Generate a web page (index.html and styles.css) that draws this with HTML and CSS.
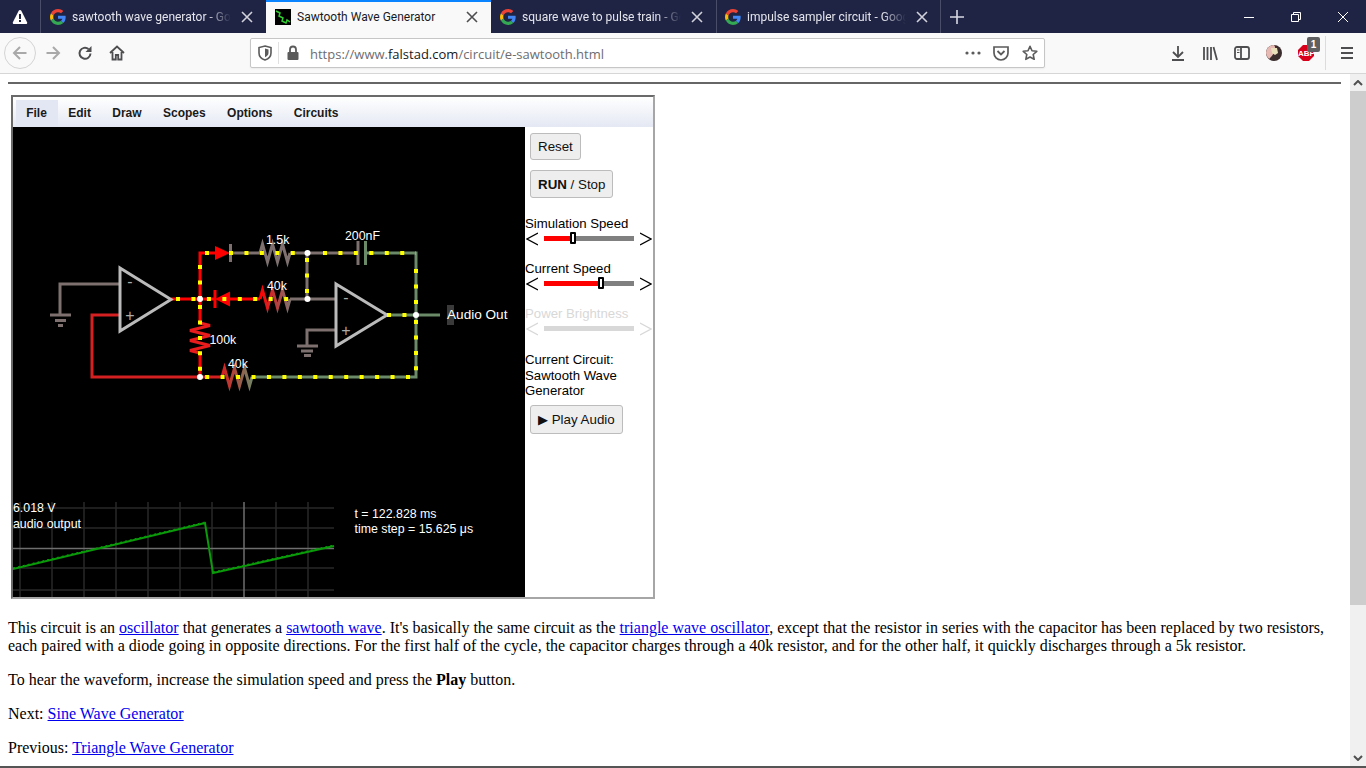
FILE: index.html
```html
<!DOCTYPE html>
<html lang="en">
<head>
  <meta charset="UTF-8">
  <meta name="viewport" content="width=device-width, initial-scale=1.0">
  <title>Sawtooth Wave Generator</title>
  <link rel="stylesheet" href="styles.css">
</head>
<body>
  <svg class="defs" width="0" height="0">
    <defs>
      <symbol id="google" viewBox="0 0 48 48">
        <path fill="#EA4335" d="M24 9.5c3.54 0 6.71 1.22 9.21 3.6l6.85-6.85C35.9 2.38 30.47 0 24 0 14.62 0 6.51 5.38 2.56 13.22l7.98 6.19C12.43 13.72 17.74 9.5 24 9.5z"/>
        <path fill="#4285F4" d="M46.98 24.55c0-1.57-.15-3.09-.38-4.55H24v9.02h12.94c-.58 2.96-2.26 5.48-4.78 7.18l7.73 6c4.51-4.18 7.09-10.36 7.09-17.65z"/>
        <path fill="#FBBC05" d="M10.53 28.59c-.48-1.45-.76-2.99-.76-4.59s.27-3.14.76-4.59l-7.98-6.19C.92 16.46 0 20.12 0 24c0 3.88.92 7.54 2.56 10.78l7.97-6.19z"/>
        <path fill="#34A853" d="M24 48c6.48 0 11.93-2.13 15.89-5.81l-7.73-6c-2.15 1.45-4.92 2.3-8.16 2.3-6.26 0-11.57-4.22-13.47-9.91l-7.98 6.19C6.51 42.62 14.62 48 24 48z"/>
      </symbol>
      <symbol id="close" viewBox="0 0 12 12">
        <path d="M1 1l10 10M11 1L1 11" fill="none" stroke="currentColor" stroke-width="1.6"/>
      </symbol>
    </defs>
  </svg>

  <div class="window">
    <div class="tabbar">
      <div class="alert-box">
        <svg width="16" height="16" viewBox="0 0 16 16"><path d="M8 1c.6 0 1 .3 1.300 .8l5.800 11.400c.4.800-.1 1.800-1.100 1.800H2c-1 0-1.500-1-1.100-1.800L6.700 1.800C7 1.300 7.400 1 8 1z" fill="#fff"/><path d="M7 5h2v5H7zM7 11h2v2H7z" fill="#1f2344"/></svg>
      </div>
      <div class="tab">
        <svg class="fav" width="16" height="16"><use href="#google"/></svg>
        <span class="tab-title">sawtooth wave generator - Goo</span>
        <svg class="tab-close" width="12" height="12"><use href="#close"/></svg>
      </div>
      <div class="tab tab-active">
        <svg class="fav" width="16" height="16" viewBox="0 0 16 16"><rect width="16" height="16" fill="#000"/><path d="M1 2l4 2-1 3 4 2-1 3 4 2 1-3 3 2" fill="none" stroke="#3c3" stroke-width="1.500"/></svg>
        <span class="tab-title">Sawtooth Wave Generator</span>
        <svg class="tab-close" width="12" height="12"><use href="#close"/></svg>
      </div>
      <div class="tab">
        <svg class="fav" width="16" height="16"><use href="#google"/></svg>
        <span class="tab-title">square wave to pulse train - Go</span>
        <svg class="tab-close" width="12" height="12"><use href="#close"/></svg>
      </div>
      <div class="tab tab-last">
        <svg class="fav" width="16" height="16"><use href="#google"/></svg>
        <span class="tab-title">impulse sampler circuit - Googl</span>
        <svg class="tab-close" width="12" height="12"><use href="#close"/></svg>
      </div>
      <svg class="new-tab" width="16" height="16" viewBox="0 0 16 16"><path d="M8 1v14M1 8h14" stroke="#d8d9e2" stroke-width="1.600"/></svg>
      <div class="win-controls">
        <svg width="12" height="12" viewBox="0 0 12 12"><path d="M1 6.500h10" stroke="#fff"/></svg>
        <svg width="12" height="12" viewBox="0 0 12 12"><path d="M1.500 3.500h7v7h-7zM3.500 3.500v-2h7v7h-2" fill="none" stroke="#fff"/></svg>
        <svg width="12" height="12" viewBox="0 0 12 12"><path d="M1 1l10 10M11 1L1 11" stroke="#fff"/></svg>
      </div>
    </div>

    <div class="toolbar">
      <div class="nav-group">
        <span class="nav-btn nav-back">
          <svg width="16" height="16" viewBox="0 0 16 16"><path d="M14.500 8H2M8 2L2 8l6 6" fill="none" stroke="#a9a9aa" stroke-width="2"/></svg>
        </span>
        <span class="nav-btn">
          <svg width="16" height="16" viewBox="0 0 16 16"><path d="M1.500 8H14M8 2l6 6-6 6" fill="none" stroke="#a9a9aa" stroke-width="2"/></svg>
        </span>
        <span class="nav-btn">
          <svg width="16" height="16" viewBox="0 0 16 16"><path d="M13.500 8.500A5.500 5.500 0 1 1 11.500 4" fill="none" stroke="#4e4e50" stroke-width="2"/><path d="M14.500 1v6h-6z" fill="#4e4e50"/></svg>
        </span>
        <span class="nav-btn">
          <svg width="16" height="16" viewBox="0 0 16 16"><path d="M1 8l7-6.500L15 8M3.500 7v7.500h3.300V10h2.400v4.500h3.300V7" fill="none" stroke="#4e4e50" stroke-width="1.800"/></svg>
        </span>
      </div>
      <div class="urlbar">
        <svg width="14" height="16" viewBox="0 0 14 16"><path d="M7 1l6 1.500V8c0 3.500-3 6-6 7-3-1-6-3.500-6-7V2.500z" fill="none" stroke="#5b5b5c" stroke-width="1.600"/><path d="M7 3.500l3.500 1V8c0 2-1.800 3.500-3.500 4.300z" fill="#5b5b5c"/></svg>
        <span class="url-sep"></span>
        <svg width="14" height="16" viewBox="0 0 14 16"><path d="M4 7V4.500a3 3 0 0 1 6 0V7" fill="none" stroke="#5b5b5c" stroke-width="1.800"/><rect x="1.500" y="7" width="11" height="8" rx="1" fill="#5b5b5c"/></svg>
        <span class="url-text">https://www.<b>falstad.com</b>/circuit/e-sawtooth.html</span>
        <svg class="url-dots" width="16" height="4" viewBox="0 0 16 4"><circle cx="2" cy="2" r="1.600"/><circle cx="8" cy="2" r="1.600"/><circle cx="14" cy="2" r="1.600"/></svg>
        <svg width="16" height="16" viewBox="0 0 16 16"><path d="M1 2h14v6a7 7 0 0 1-14 0z" fill="none" stroke="#5b5b5c" stroke-width="1.700"/><path d="M4.500 6L8 9.500 11.500 6" fill="none" stroke="#5b5b5c" stroke-width="1.800"/></svg>
        <svg width="16" height="16" viewBox="0 0 16 16"><path d="M8 1.300l2 4.500 4.800.5-3.600 3.200 1 4.800L8 12l-4.200 2.300 1-4.800L1.200 6.300 6 5.800z" fill="none" stroke="#5b5b5c" stroke-width="1.600" stroke-linejoin="round"/></svg>
      </div>
      <div class="tool-group">
        <span class="tool-btn">
          <svg width="16" height="16" viewBox="0 0 16 16"><path d="M8 1v10M3 7l5 5 5-5" fill="none" stroke="#4e4e50" stroke-width="1.800"/><path d="M2 15h12" stroke="#4e4e50" stroke-width="2"/></svg>
        </span>
        <span class="tool-btn">
          <svg width="16" height="16" viewBox="0 0 16 16"><path d="M2 2v13M5.500 2v13M9 2v13M11.500 2l3.500 13" fill="none" stroke="#4e4e50" stroke-width="1.800"/></svg>
        </span>
        <span class="tool-btn">
          <svg width="16" height="16" viewBox="0 0 16 16"><rect x="1" y="2" width="14" height="12" rx="2" fill="none" stroke="#4e4e50" stroke-width="1.800"/><path d="M7 2v12" stroke="#4e4e50" stroke-width="1.800"/><path d="M3 5h2.500M3 7.500h2.500" stroke="#4e4e50"/></svg>
        </span>
        <span class="tool-btn">
          <svg width="16" height="16" viewBox="0 0 16 16"><circle cx="8" cy="8" r="8" fill="#3a2c2c"/><path d="M0 8a8 8 0 0 1 8-8c2 2 1 6 0 8-2 3-4 5-5 6A8 8 0 0 1 0 8z" fill="#e6b9b2"/><path d="M5 3h6l1 5-3 2-3-2z" fill="#e9dfb8"/></svg>
        </span>
        <span class="tool-btn abp">
          <svg width="16" height="16" viewBox="0 0 16 16"><path d="M5 0h6l5 5v6l-5 5H5l-5-5V5z" fill="#d8001b"/></svg>
          <span class="abp-text">ABP</span>
          <span class="abp-count">1</span>
        </span>
        <span class="tool-sep"></span>
        <span class="tool-btn tool-menu">
          <svg width="14" height="14" viewBox="0 0 14 14"><path d="M1 2h12M1 7h12M1 12h12" stroke="#4e4e50" stroke-width="2"/></svg>
        </span>
      </div>
    </div>

    <div class="viewport">
      <div class="page">
        <hr class="rule">
        <div class="sim">
          <div class="menubar">
            <span class="menu-item menu-open">File</span>
            <span class="menu-item">Edit</span>
            <span class="menu-item">Draw</span>
            <span class="menu-item">Scopes</span>
            <span class="menu-item">Options</span>
            <span class="menu-item">Circuits</span>
          </div>
          <div class="sim-body">
            <svg class="canvas" width="512" height="470" viewBox="13 127 512 470">
              <defs>
                <linearGradient id="midres" gradientUnits="userSpaceOnUse" x1="260" y1="0" x2="290" y2="0">
                  <stop offset="0" stop-color="#f00"/><stop offset="1" stop-color="#7d706e"/>
                </linearGradient>
                <linearGradient id="lowres" gradientUnits="userSpaceOnUse" x1="222" y1="0" x2="254" y2="0">
                  <stop offset="0" stop-color="#d42020"/><stop offset="1" stop-color="#6a8a68"/>
                </linearGradient>
              </defs>

              <!-- scope -->
              <path class="grid" d="M20 502v95M52 502v95M84 502v95M116 502v95M148 502v95M180 502v95M212 502v95M276 502v95M308 502v95M13 508h321M13 528h321M13 568h321M13 590h321"/>
              <path class="grid-main" d="M13 548.500h321M244 502v95"/>
              <path class="trace" d="M13 569L205 523L213 573L334 546"/>
              <path class="trace teeth" d="M13 568L205 522M213 572L334 545"/>
              <text class="label" x="13" y="512">6.018 V</text>
              <text class="label" x="13" y="528">audio output</text>
              <text class="label" x="354.500" y="518">t = 122.828 ms</text>
              <text class="label" x="354.500" y="533">time step = 15.625 μs</text>

              <!-- wires -->
              <path class="wire gray" d="M231 253H260M290 253H358M307 253V299M290 299H336M120 284H60V314M336 330H307V346"/>
              <path class="wire green" d="M365 253H416V377H254M387 315H440"/>
              <path class="wire dim-red" d="M120 315H92V377H222"/>
              <path class="wire red" d="M215 253H200V323M200 354V377M171 299H215M230 299H260"/>

              <!-- resistors -->
              <path class="res" stroke="#7d706e" d="M260 253l2.500-9 5 18 5-18 5 18 5-18 5 18 2.500-9"/>
              <path class="res" stroke="url(#midres)" d="M260 299l2.500-9 5 18 5-18 5 18 5-18 5 18 2.500-9"/>
              <path class="res" stroke="url(#lowres)" d="M222 377l2.500-9 5 18 5-18 5 18 5-18 5 18 2.500-9"/>
              <path class="res" stroke="#e81c1c" d="M200 323l10 2.500-20 5 20 5-20 5 20 5-20 5 10 2.500"/>

              <!-- diodes and capacitor -->
              <path class="diode" d="M215 246v14l15-7z"/>
              <path class="wire gray" d="M230.500 244v18"/>
              <path class="diode" d="M230 291.500v15l-15-7.500z"/>
              <path class="wire red" d="M215 290v18"/>
              <path class="wire gray" d="M358 241v24"/>
              <path class="wire green" d="M365.500 241v24"/>

              <!-- grounds -->
              <path class="wire gray" d="M50 315h21M55 320.500h11M58 325.500h5M297 346h21M301 351h12M304 355.500h7"/>

              <!-- op amps -->
              <path class="opamp" d="M120 268L171 299.500L120 331Z"/>
              <path class="opamp" d="M336 284L387 315L336 346Z"/>
              <text class="sign" x="130" y="287">-</text>
              <text class="sign" x="130" y="320.500">+</text>
              <text class="sign" x="346" y="303">-</text>
              <text class="sign" x="346" y="336">+</text>

              <!-- current dots -->
              <path class="dots" d="M205 253H215M229 253H295M323 253H416M416 269V315M416 320V377M410 377H200M200 265V299M200 305V377M176 299H296M307 258V299M387 315H416"/>

              <circle class="node" cx="200" cy="299" r="3"/>
              <circle class="node" cx="200" cy="377" r="3"/>
              <circle class="node" cx="307.500" cy="253" r="3"/>
              <circle class="node" cx="307.500" cy="299" r="3"/>
              <circle class="node" cx="416" cy="315" r="3"/>

              <rect class="out-post" x="447" y="305" width="7" height="20"/>
              <text class="label big" x="447" y="319">Audio Out</text>
              <text class="label" x="266" y="244">1.5k</text>
              <text class="label" x="267" y="290">40k</text>
              <text class="label" x="345" y="240">200nF</text>
              <text class="label" x="209.500" y="344">100k</text>
              <text class="label" x="228" y="368">40k</text>
            </svg>

            <div class="panel">
              <button class="btn btn-reset">Reset</button>
              <button class="btn btn-run"><b>RUN</b> / Stop</button>

              <div class="ctl ctl-first">
                <div class="ctl-label">Simulation Speed</div>
                <div class="slider">
                  <svg width="12" height="16" viewBox="0 0 12 16"><path d="M12 2L1 8l11 6" fill="none" stroke="#000" stroke-width="1.200"/></svg>
                  <div class="track"><div class="fill" style="width: 29px"></div><span class="thumb" style="left: 26px"></span></div>
                  <svg width="12" height="16" viewBox="0 0 12 16"><path d="M0 2l11 6L0 14" fill="none" stroke="#000" stroke-width="1.200"/></svg>
                </div>
              </div>
              <div class="ctl">
                <div class="ctl-label">Current Speed</div>
                <div class="slider">
                  <svg width="12" height="16" viewBox="0 0 12 16"><path d="M12 2L1 8l11 6" fill="none" stroke="#000" stroke-width="1.200"/></svg>
                  <div class="track"><div class="fill" style="width: 57px"></div><span class="thumb" style="left: 54px"></span></div>
                  <svg width="12" height="16" viewBox="0 0 12 16"><path d="M0 2l11 6L0 14" fill="none" stroke="#000" stroke-width="1.200"/></svg>
                </div>
              </div>
              <div class="ctl ctl-off">
                <div class="ctl-label">Power Brightness</div>
                <div class="slider">
                  <svg width="12" height="16" viewBox="0 0 12 16"><path d="M12 2L1 8l11 6" fill="none" stroke="#d8d8d8" stroke-width="1.200"/></svg>
                  <div class="track"></div>
                  <svg width="12" height="16" viewBox="0 0 12 16"><path d="M0 2l11 6L0 14" fill="none" stroke="#d8d8d8" stroke-width="1.200"/></svg>
                </div>
              </div>

              <div class="circuit-name">Current Circuit:<br>Sawtooth Wave<br>Generator</div>
              <button class="btn btn-play">&#9654; Play Audio</button>
            </div>
          </div>
        </div>

        <p class="first">This circuit is an <a href="#">oscillator</a> that generates a <a href="#">sawtooth wave</a>. It's basically the same circuit as the <a href="#">triangle wave oscillator</a>, except that the resistor in series with the capacitor has been replaced by two resistors, each paired with a diode going in opposite directions. For the first half of the cycle, the capacitor charges through a 40k resistor, and for the other half, it quickly discharges through a 5k resistor.</p>
        <p>To hear the waveform, increase the simulation speed and press the <b>Play</b> button.</p>
        <p>Next: <a href="#">Sine Wave Generator</a></p>
        <p>Previous: <a href="#">Triangle Wave Generator</a></p>
      </div>

      <div class="scrollbar">
        <span class="scroll-btn">
          <svg width="10" height="6" viewBox="0 0 10 6"><path d="M1 5l4-4 4 4" fill="none" stroke="#505050" stroke-width="2"/></svg>
        </span>
        <div class="scroll-track"><div class="scroll-thumb"></div></div>
        <span class="scroll-btn">
          <svg width="10" height="6" viewBox="0 0 10 6"><path d="M1 1l4 4 4-4" fill="none" stroke="#505050" stroke-width="2"/></svg>
        </span>
      </div>
    </div>
    <div class="bottom-line"></div>
  </div>
</body>
</html>
```

FILE: styles.css
```css
html, body {
  margin: 0;
  padding: 0;
  height: 100%;
  overflow: hidden;
}

.defs {
  position: absolute;
}

.window {
  display: flex;
  flex-direction: column;
  height: 768px;
  background: #fff;
}

/* tab strip */
.tabbar {
  display: flex;
  align-items: center;
  height: 33px;
  flex: none;
  background: #1f2344;
  font-family: Roboto, sans-serif;
  font-size: 12px;
  color: #e4e5ec;
}

.alert-box {
  display: flex;
  align-items: center;
  justify-content: center;
  width: 40px;
  height: 33px;
  border-right: 1px solid #4a4d68;
}

.tab {
  display: flex;
  align-items: center;
  width: 225px;
  height: 33px;
  box-sizing: border-box;
  padding: 0 13px 0 9px;
  flex: none;
}

.tab-last {
  border-left: 1px solid #4a4d68;
  border-right: 1px solid #4a4d68;
  padding-left: 8px;
  padding-right: 12px;
}

.tab-active {
  background: #f9f9fa;
  color: #18191f;
  border-top: 2px solid #0a84ff;
  padding-bottom: 2px;
}

.fav {
  flex: none;
}

.tab-title {
  flex: 1;
  margin: 0 10px 0 6px;
  overflow: hidden;
  white-space: nowrap;
  -webkit-mask-image: linear-gradient(to right, #000 85%, transparent);
  mask-image: linear-gradient(to right, #000 85%, transparent);
}

.tab-active .tab-title {
  -webkit-mask-image: none;
  mask-image: none;
}

.tab-close {
  flex: none;
  color: #d0d1da;
}

.tab-active .tab-close {
  color: #4e4e50;
}

.new-tab {
  margin-left: 8px;
}

.win-controls {
  display: flex;
  align-items: center;
  gap: 35px;
  margin-left: auto;
  margin-right: 17px;
}

/* nav bar */
.toolbar {
  display: flex;
  align-items: center;
  height: 40px;
  flex: none;
  background: #f9f9fa;
  border-bottom: 1px solid #d6d6d7;
}

.nav-group {
  display: flex;
  align-items: center;
  width: 250px;
  padding-left: 4px;
  box-sizing: border-box;
}

.nav-btn {
  display: flex;
  align-items: center;
  justify-content: center;
  width: 32px;
  height: 32px;
  box-sizing: border-box;
}

.nav-back {
  margin-right: 1px;
  border: 1px solid #d4d4d5;
  border-radius: 50%;
}

.urlbar {
  display: flex;
  align-items: center;
  width: 795px;
  height: 30px;
  box-sizing: border-box;
  padding: 0 6px 0 7px;
  background: #fff;
  border: 1px solid #c6c6c7;
  border-radius: 2px;
  box-shadow: 0 1px 2px rgba(0, 0, 0, 0.06);
}

.url-sep {
  width: 1px;
  height: 22px;
  margin: 0 7px 0 6px;
  background: #e0e0e1;
}

.url-text {
  flex: 1;
  margin-left: 10px;
  padding-top: 1px;
  font-family: "Open Sans", sans-serif;
  font-size: 13px;
  color: #6d6d70;
  white-space: nowrap;
}

.url-text b {
  font-weight: 400;
  color: #17171a;
}

.url-dots {
  fill: #5b5b5c;
  margin-right: 12px;
}

.urlbar svg:last-child {
  margin-left: 13px;
}

.tool-group {
  display: flex;
  align-items: center;
  margin-left: 117px;
}

.tool-btn {
  position: relative;
  display: flex;
  align-items: center;
  justify-content: center;
  width: 32px;
  height: 32px;
}

.abp {
  width: 31px;
}

.abp-text {
  position: absolute;
  top: 12px;
  left: 8px;
  font: bold 8px "Liberation Sans", sans-serif;
  color: #fff;
}

.abp-count {
  position: absolute;
  top: 0;
  left: 17px;
  width: 13px;
  height: 15px;
  background: #5f5f61;
  border-radius: 2px;
  font: bold 10px/15px "Liberation Sans", sans-serif;
  color: #fff;
  text-align: center;
}

.tool-sep {
  width: 1px;
  height: 34px;
  margin-left: 4px;
  background: #dcdcdd;
}

.tool-menu {
  margin-left: 5px;
}

/* page area */
.viewport {
  display: flex;
  flex: 1;
  min-height: 0;
}

.page {
  flex: 1;
  min-width: 0;
  padding: 8px 8px 0;
  overflow: hidden;
  font-family: "Liberation Serif", serif;
  font-size: 16px;
  line-height: 18px;
  color: #000;
}

.rule {
  height: 2px;
  margin: 0 1px 11px 0;
  border: none;
  background: #666;
}

p {
  margin: 16px 0;
}

p.first {
  margin-top: 20px;
}

a {
  color: #00e;
}

/* circuit simulator */
.sim {
  width: 640px;
  margin-left: 3px;
  border: 2px solid;
  border-color: #6a6a6a #a6a6a6 #a6a6a6 #6a6a6a;
  font-family: "Liberation Sans", sans-serif;
}

.menubar {
  display: flex;
  align-items: flex-end;
  height: 30px;
  padding-left: 2.500px;
  box-sizing: border-box;
  background: linear-gradient(#fff, #e4e8f3);
}

.menu-item {
  padding: 0 10.700px;
  height: 27px;
  font-size: 12px;
  font-weight: bold;
  line-height: 27px;
  color: #1a1a1a;
}

.menu-open {
  background: #e2e7f3;
}

.sim-body {
  display: flex;
  height: 470px;
}

.canvas {
  display: block;
  flex: none;
  background: #000;
}

.grid {
  fill: none;
  stroke: #282828;
  stroke-width: 1.500;
}

.grid-main {
  fill: none;
  stroke: #6e6e6e;
  stroke-width: 1.500;
}

.trace {
  fill: none;
  stroke: #0a9a0a;
  stroke-width: 2;
}

.teeth {
  stroke-width: 1;
  stroke-dasharray: 2 3;
}

.label {
  font-family: "Liberation Sans", sans-serif;
  font-size: 12.350px;
  fill: #fff;
}

.label.big {
  font-size: 13.600px;
}

.sign {
  font-family: "Liberation Sans", sans-serif;
  font-size: 16px;
  fill: #aaa;
  text-anchor: middle;
}

.wire {
  fill: none;
  stroke-width: 3;
}

.gray {
  stroke: #7d706e;
}

.green {
  stroke: #6a8a68;
}

.red {
  stroke: #f00;
}

.dim-red {
  stroke: #d42020;
}

.res {
  fill: none;
  stroke-width: 3;
}

.diode {
  fill: #f00;
}

.opamp {
  fill: none;
  stroke: #bbb;
  stroke-width: 3;
}

.dots {
  fill: none;
  stroke: #ff0;
  stroke-width: 4;
  stroke-dasharray: 4 11.450;
}

.node {
  fill: #fff;
}

.out-post {
  fill: #3a3a3a;
}

/* right hand controls */
.panel {
  flex: 1;
  display: flex;
  flex-direction: column;
  align-items: flex-start;
  padding-top: 6px;
  font-size: 13.200px;
  color: #000;
}

.btn {
  margin-left: 5px;
  padding: 0 7px;
  height: 27px;
  background: #eee;
  border: 1px solid #bcbcbc;
  border-radius: 3px;
  font-family: "Liberation Sans", sans-serif;
  font-size: 13.333px;
  color: #111;
}

.btn-run {
  height: 28px;
  margin-top: 10px;
}

.btn-play {
  height: 29px;
  margin-top: 6.500px;
}

.ctl {
  width: 128px;
  margin-top: 15px;
}

.ctl-first {
  margin-top: 18px;
}

.ctl-label {
  height: 15px;
  line-height: 15px;
}

.slider {
  display: flex;
  align-items: center;
  gap: 6px;
  height: 15px;
  padding-left: 1px;
}

.track {
  position: relative;
  width: 90px;
  height: 5px;
  background: #808080;
}

.fill {
  height: 5px;
  background: #f00;
}

.thumb {
  position: absolute;
  top: -4px;
  width: 6px;
  height: 12px;
  box-sizing: border-box;
  background: #fff;
  border: 2px solid #000;
  border-radius: 1px;
}

.ctl-off {
  color: #d8d8d8;
}

.ctl-off .track {
  background: #d8d8d8;
}

.circuit-name {
  margin-top: 16px;
  line-height: 15.500px;
}

/* scrollbar */
.scrollbar {
  display: flex;
  flex-direction: column;
  width: 16px;
  flex: none;
  background: #f0f0f0;
}

.scroll-btn {
  display: flex;
  align-items: center;
  justify-content: center;
  height: 17px;
  flex: none;
}

.scroll-track {
  flex: 1;
}

.scroll-thumb {
  height: 514px;
  background: #cdcdcd;
}

.bottom-line {
  height: 2px;
  flex: none;
  background: #555;
}
```
